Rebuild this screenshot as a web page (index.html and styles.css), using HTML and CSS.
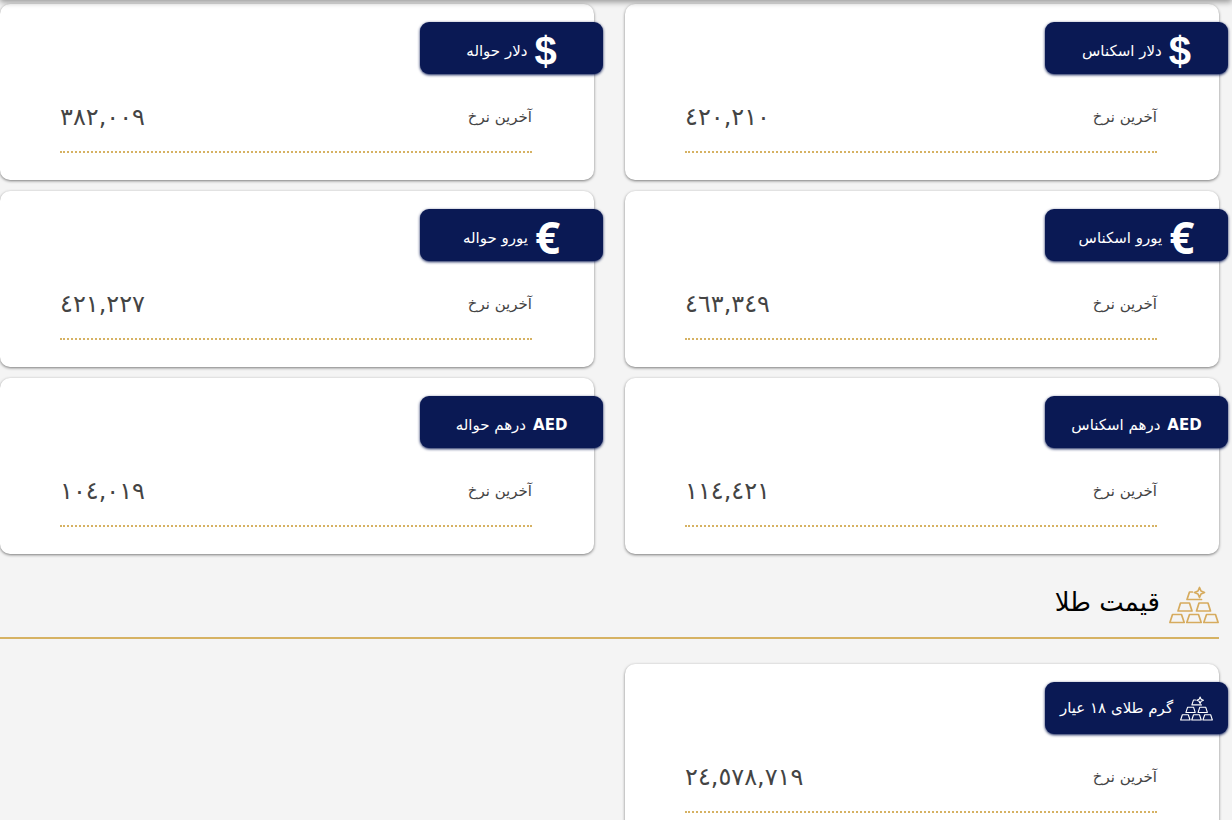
FILE: index.html
```
<!DOCTYPE html>
<html lang="fa" dir="rtl">
<head>
    <meta charset="UTF-8">
    <meta name="viewport" content="width=device-width, initial-scale=1.0">
    <title>قیمت ارز و طلا</title>
    <link rel="stylesheet" href="styles.css">
</head>
<body>
    <!-- gold bars icon, shared by the heading and the badge -->
    <svg class="sprite" aria-hidden="true">
        <symbol id="gold" viewBox="0 0 50 38">
            <g fill="none" stroke="currentColor" stroke-width="1.7" stroke-linejoin="round" stroke-linecap="round">
                <path d="M3.5 28.5H12.5L15.2 36.5H.9ZM20.5 28.5H29.5L32.2 36.5H17.8ZM37.5 28.5H46.5L49.1 36.5H34.8Z"/>
                <path d="M11.5 17H20.5L23 25H9ZM30 17H39L41.5 25H27.5Z"/>
                <path d="M23.5 6H20.5L18 13.5H32.5"/>
                <path d="M30.5 1.5L32 5 35.5 6.5 32 8 30.5 11.5 29 8 25.5 6.5 29 5Z"/>
            </g>
        </symbol>
    </svg>

    <header class="topbar"></header>

    <main class="container">
        <section class="cards">
            <article class="card">
                <h3 class="badge"><span class="sign">$</span><span class="name">دلار اسکناس</span></h3>
                <div class="rate"><span>آخرین نرخ</span><span class="price">٤٢٠,٢١٠</span></div>
            </article>
            <article class="card">
                <h3 class="badge"><span class="sign">$</span><span class="name">دلار حواله</span></h3>
                <div class="rate"><span>آخرین نرخ</span><span class="price">٣٨٢,٠٠٩</span></div>
            </article>
            <article class="card">
                <h3 class="badge"><span class="sign euro">€</span><span class="name">یورو اسکناس</span></h3>
                <div class="rate"><span>آخرین نرخ</span><span class="price">٤٦٣,٣٤٩</span></div>
            </article>
            <article class="card">
                <h3 class="badge"><span class="sign euro">€</span><span class="name">یورو حواله</span></h3>
                <div class="rate"><span>آخرین نرخ</span><span class="price">٤٢١,٢٢٧</span></div>
            </article>
            <article class="card">
                <h3 class="badge"><span class="name code">AED</span><span class="name">درهم اسکناس</span></h3>
                <div class="rate"><span>آخرین نرخ</span><span class="price">١١٤,٤٢١</span></div>
            </article>
            <article class="card">
                <h3 class="badge"><span class="name code">AED</span><span class="name">درهم حواله</span></h3>
                <div class="rate"><span>آخرین نرخ</span><span class="price">١٠٤,٠١٩</span></div>
            </article>
        </section>

        <h2 class="title"><svg class="title-icon" aria-hidden="true"><use href="#gold"/></svg><span class="title-text">قیمت طلا</span></h2>

        <section class="cards">
            <article class="card">
                <h3 class="badge"><svg class="badge-icon" aria-hidden="true"><use href="#gold"/></svg><span>گرم طلای ١٨ عیار</span></h3>
                <div class="rate"><span>آخرین نرخ</span><span class="price">٢٤,٥٧٨,٧١٩</span></div>
            </article>
        </section>
    </main>
</body>
</html>
```
FILE: styles.css
```
* {
    box-sizing: border-box;
}
body {
    margin: 0;
    background: #f4f4f4;
    color: #000;
    font-family: "DejaVu Sans", sans-serif;
}
.sprite {
    position: absolute;
    width: 0;
    height: 0;
}
.topbar {
    position: fixed;
    top: -60px;
    left: 0;
    right: 0;
    height: 60px;
    z-index: 10;
    box-shadow: 0 2px 6px rgba(0, 0, 0, 0.4);
}
.container {
    padding-top: 4px;
    padding-right: 13px;
}
.cards {
    display: grid;
    grid-template-columns: 1fr 1fr;
    gap: 11px 31px;
}
.card {
    height: 176px;
    padding-top: 18px;
    background: #fff;
    border-radius: 10px;
    box-shadow: 0 1px 3px rgba(0, 0, 0, 0.5);
}
.badge {
    display: flex;
    align-items: center;
    justify-content: center;
    gap: 7px;
    width: 183px;
    height: 52px;
    margin: 0 -9px 0 0;
    border-radius: 9px;
    background: #0a1954;
    box-shadow: 0 1px 3px #0a1954;
    color: #fff;
    font-size: 15px;
    font-weight: 400;
    white-space: nowrap;
}
.name {
    padding-top: 6px;
}
.sign {
    font: bold 40px/52px "Liberation Sans", sans-serif;
    padding-top: 6px;
}
.euro {
    font-family: "Open Sans", sans-serif;
    font-size: 44px;
    padding-top: 4px;
}
.code {
    font-weight: 700;
}
.badge-icon {
    width: 33px;
    height: 25px;
}
.rate {
    display: flex;
    align-items: center;
    justify-content: space-between;
    height: 62px;
    margin: 17px 62px 0 60px;
    padding-bottom: 8px;
    border-bottom: 2px dotted #d6b263;
    color: #444;
    font-size: 15px;
}
.price {
    font-size: 24px;
    direction: ltr;
}
.title {
    display: flex;
    align-items: center;
    gap: 9px;
    height: 66px;
    margin: 19px 0 25px;
    border-bottom: 2px solid #d6b263;
    font-size: 26px;
    font-weight: 400;
}
.title-text {
    padding-bottom: 6px;
}
.title-icon {
    width: 50px;
    height: 38px;
    color: #d6ab5e;
}
```
